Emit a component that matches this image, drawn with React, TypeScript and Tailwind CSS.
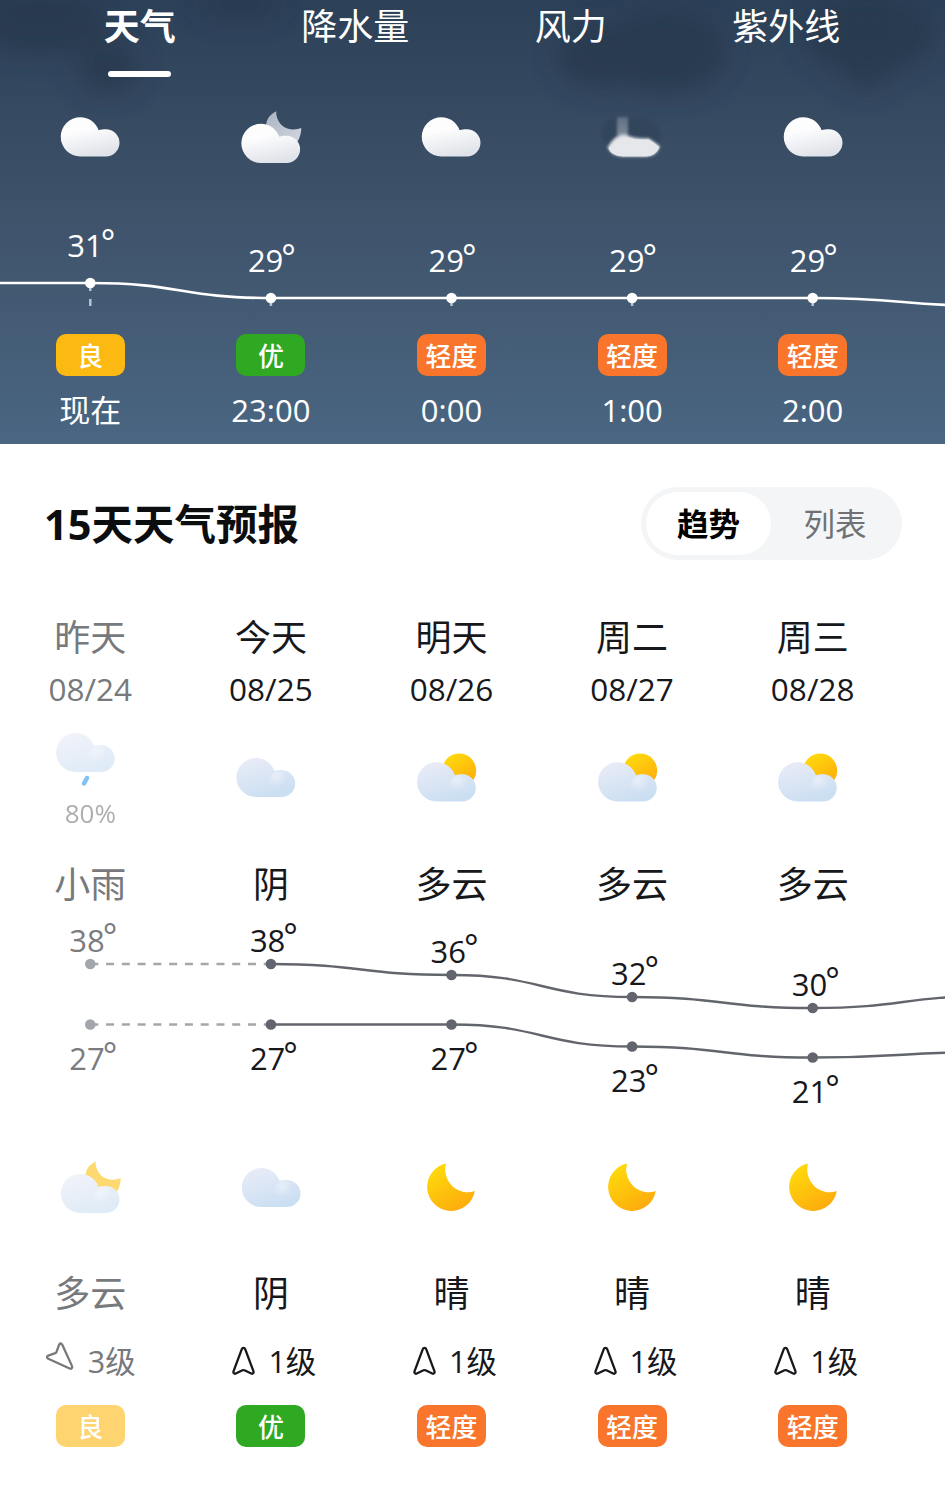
type IconName = "cloud" | "cloudMoon" | "cloudFaded" | "rain" | "overcast" | "partly" | "nightCloudy" | "nightOvercast" | "moon"

type AirLevel = "good" | "great" | "light"

type Hour = {
  time: string
  temp: number
  y: number
  icon: IconName
  air: AirLevel
}

type Day = {
  name: string
  date: string
  icon: IconName
  rain?: string
  text: string
  high: number
  highY: number
  low: number
  lowY: number
  nightIcon: IconName
  nightText: string
  wind: string
  air: AirLevel
}

const tabs = ["天气", "降水量", "风力", "紫外线"]

const hours: Hour[] = [
  { time: "现在", temp: 31, y: 83, icon: "cloud", air: "good" },
  { time: "23:00", temp: 29, y: 98, icon: "cloudMoon", air: "great" },
  { time: "0:00", temp: 29, y: 98, icon: "cloud", air: "light" },
  { time: "1:00", temp: 29, y: 98, icon: "cloudFaded", air: "light" },
  { time: "2:00", temp: 29, y: 98, icon: "cloud", air: "light" },
]

const days: Day[] = [
  { name: "昨天", date: "08/24", icon: "rain", rain: "80%", text: "小雨", high: 38, highY: 54, low: 27, lowY: 114.5, nightIcon: "nightCloudy", nightText: "多云", wind: "3级", air: "good" },
  { name: "今天", date: "08/25", icon: "overcast", text: "阴", high: 38, highY: 54, low: 27, lowY: 114.5, nightIcon: "nightOvercast", nightText: "阴", wind: "1级", air: "great" },
  { name: "明天", date: "08/26", icon: "partly", text: "多云", high: 36, highY: 65, low: 27, lowY: 114.5, nightIcon: "moon", nightText: "晴", wind: "1级", air: "light" },
  { name: "周二", date: "08/27", icon: "partly", text: "多云", high: 32, highY: 87, low: 23, lowY: 136.5, nightIcon: "moon", nightText: "晴", wind: "1级", air: "light" },
  { name: "周三", date: "08/28", icon: "partly", text: "多云", high: 30, highY: 98, low: 21, lowY: 147.5, nightIcon: "moon", nightText: "晴", wind: "1级", air: "light" },
]

const airLevels = {
  good: { label: "良", color: "bg-[#fcb912]" },
  great: { label: "优", color: "bg-[#2fa822]" },
  light: { label: "轻度", color: "bg-[#f8752b]" },
}

const COL = 180.6
const colX = (i: number) => COL * i + COL / 2

// smooth line with horizontal tangents at every point
function curve(ys: number[], from = 0) {
  return ys
    .map((y, i) => {
      const x = colX(i + from)
      if (i === 0) return `M${x} ${y}`
      const mid = x - COL / 2
      return `C${mid} ${ys[i - 1]} ${mid} ${y} ${x} ${y}`
    })
    .join(" ")
}

function Gradients() {
  return (
    <svg className="absolute size-0" aria-hidden="true">
      <defs>
        <linearGradient id="white" gradientUnits="userSpaceOnUse" x1="24" y1="0" x2="32" y2="39">
          <stop offset="0.3" stopColor="#fdfdfe" />
          <stop offset="1" stopColor="#dfe2e8" />
        </linearGradient>
        <linearGradient id="blue" gradientUnits="userSpaceOnUse" x1="18" y1="0" x2="30" y2="39">
          <stop offset="0" stopColor="#e8ebf7" />
          <stop offset="1" stopColor="#cbdff2" />
        </linearGradient>
        <radialGradient id="glow" gradientUnits="userSpaceOnUse" cx="40" cy="18" r="11">
          <stop offset="0" stopColor="#eaf0f9" stopOpacity="0.85" />
          <stop offset="1" stopColor="#eaf0f9" stopOpacity="0" />
        </radialGradient>
        <linearGradient id="sun" x1="0.2" y1="0" x2="0.8" y2="1">
          <stop offset="0" stopColor="#ffdc0c" />
          <stop offset="1" stopColor="#fda80d" />
        </linearGradient>
        <linearGradient id="greyMoon" x1="0" y1="0" x2="1" y2="1">
          <stop offset="0" stopColor="#a9b3c1" />
          <stop offset="1" stopColor="#d3d8e0" />
        </linearGradient>
        <linearGradient id="streak" x1="0" y1="0" x2="0" y2="1">
          <stop offset="0" stopColor="#8f9cac" />
          <stop offset="1" stopColor="#c9cfd8" />
        </linearGradient>
        <filter id="soft" x="-20%" y="-20%" width="140%" height="140%">
          <feGaussianBlur stdDeviation="1.5" />
        </filter>
        <filter id="softer" x="-30%" y="-30%" width="160%" height="160%">
          <feGaussianBlur stdDeviation="13" />
        </filter>
      </defs>
    </svg>
  )
}

function Cloud({ x, y, fill }: { x: number; y: number; fill: string }) {
  return (
    <g transform={`translate(${x} ${y})`} fill={fill}>
      <path d="M19.6 0C28 0 35.2 5.2 38 13C40 12.200 42.500 11.900 45.200 11.900A13.600 13.600 0 0 1 45.200 39.100H19.600A19.550 19.550 0 0 1 19.600 0Z" />
      {fill === "url(#blue)" && <circle cx="45.2" cy="25.5" r="13.6" fill="url(#glow)" />}
    </g>
  )
}

const crescent = "M35 -12.500C28.500 -9.500 25 -4.500 24.500 3L40 20L56.500 17.500C58.500 14 60 9 60 4C55 6.500 46 6.500 40.500 1.500C36.500 -2.500 34.500 -8 35 -12.500Z"

function WeatherIcon({ name }: { name: IconName }) {
  return (
    <svg className="h-20 w-20 shrink-0 overflow-visible" viewBox="0 0 80 80">
      {name === "cloud" && <Cloud x={10.7} y={12.3} fill="url(#white)" />}
      {name === "cloudMoon" && (
        <>
          <path d={crescent} fill="url(#greyMoon)" transform="translate(10.3 18.800)" />
          <Cloud x={10.3} y={18.8} fill="url(#white)" />
        </>
      )}
      {name === "cloudFaded" && (
        <g transform="translate(8.500 12.300)">
          <path d="M0 17Q3 3 16 1H44Q60 8 60 22L57 32Q50 20 36 19L22 17L8 30Z" fill="#2b3c51" opacity="0.4" filter="url(#soft)" />
          <rect x="16.500" y="0" width="11" height="19" fill="url(#streak)" opacity="0.5" filter="url(#soft)" />
          <path d="M7 30Q15 17 24 17Q34 22 48 21Q53 24 59.500 29Q56 39 46 39.100H22Q11 39 7 30Z" fill="#e2e4e9" filter="url(#soft)" />
          <path d="M8 31Q18 21 26 20Q36 23 48 22Q53 25 59 30Q55 39 46 39.100H22Q11 39 8 31Z" fill="#e6e7eb" />
        </g>
      )}
      {name === "rain" && (
        <>
          <Cloud x={10} y={5} fill="url(#blue)" />
          <path d="M41 50L38 55.500" stroke="#2b9bec" strokeWidth="4.500" strokeLinecap="round" />
        </>
      )}
      {name === "overcast" && <Cloud x={10.4} y={30} fill="url(#blue)" />}
      {name === "partly" && (
        <>
          <circle cx="52.200" cy="42.500" r="17" fill="url(#sun)" />
          <Cloud x={10} y={34.3} fill="url(#blue)" />
        </>
      )}
      {name === "nightCloudy" && (
        <>
          <path d={crescent} fill="#fcc010" transform="translate(10.700 24)" />
          <Cloud x={10.7} y={24} fill="url(#blue)" />
        </>
      )}
      {name === "nightOvercast" && <Cloud x={10.7} y={18} fill="url(#blue)" />}
      {name === "moon" && (
        <path d="M18.500 0A24 24 0 1 0 47.300 27.500A22.500 22.500 0 0 1 18.500 0Z" fill="url(#sun)" transform="translate(16.500 13.500)" />
      )}
    </svg>
  )
}

function Badge({ level, faded = false }: { level: AirLevel; faded?: boolean }) {
  const { label, color } = airLevels[level]
  return (
    <span className={`flex h-[42px] w-[69px] items-center justify-center rounded-[10px] pt-[2px] text-[26px] leading-none font-medium text-white ${color} ${faded ? "opacity-60" : ""}`}>
      {label}
    </span>
  )
}

function Temp({ x, y, value, fill }: { x: number; y: number; value: number; fill: string }) {
  return (
    <text x={x} y={y} fill={fill} fontSize="31">
      {value}
      <tspan dy="-2.500" dx="-2" fontSize="34">°</tspan>
    </text>
  )
}

function HourlyChart() {
  const ys = hours.map((h) => h.y)
  return (
    <svg className="block h-[134px] w-full" viewBox="0 0 945 134">
      {hours.map((h, i) => (
        <path key={h.time} d={`M${colX(i)} ${h.y}V106`} stroke="#b9c4d0" strokeWidth="2.500" strokeDasharray="8 8" />
      ))}
      <path d={`M0 83H90.300 ${curve([...ys, 106])}`} fill="none" stroke="#ffffff" strokeWidth="2.600" />
      {hours.map((h, i) => (
        <g key={h.time}>
          <circle cx={colX(i)} cy={h.y} r="5.300" fill="#ffffff" />
          <Temp x={colX(i) - 23} y={h.y - 26} value={h.temp} fill="#ffffff" />
        </g>
      ))}
    </svg>
  )
}

function DailyChart() {
  const highs = days.map((d) => d.highY)
  const lows = days.map((d) => d.lowY)
  return (
    <svg className="block h-[240px] w-full" viewBox="0 0 945 240">
      <g fill="none" strokeWidth="2.400">
        <path d={`M90.300 ${highs[0]}H270.900M90.300 ${lows[0]}H270.900`} stroke="#a5a6aa" strokeDasharray="8 7.770" />
        <path d={curve([...highs.slice(1), 86], 1)} stroke="#63656d" />
        <path d={curve([...lows.slice(1), 142], 1)} stroke="#63656d" />
      </g>
      {days.map((d, i) => {
        const dot = i === 0 ? "#a3a7ac" : "#62656d"
        const text = i === 0 ? "#7b7c7f" : "#17181b"
        return (
          <g key={d.date}>
            <circle cx={colX(i)} cy={d.highY} r="5.300" fill={dot} />
            <circle cx={colX(i)} cy={d.lowY} r="5.300" fill={dot} />
            <Temp x={colX(i) - 21} y={d.highY - 12.5} value={d.high} fill={text} />
            <Temp x={colX(i) - 21} y={d.lowY + 45.5} value={d.low} fill={text} />
          </g>
        )
      })}
    </svg>
  )
}

function WindArrow({ turned }: { turned: boolean }) {
  return (
    <svg className={`h-[30px] w-[23px] ${turned ? "-translate-x-px -translate-y-[2px] rotate-135" : ""}`} viewBox="0 0 23 30" fill="none" stroke="currentColor" strokeWidth="2.300" strokeLinejoin="round">
      <path d="M9.800 3.200C10.400 1.500 12.600 1.500 13.200 3.200L21.400 25.200C22 27 20.800 28.200 19.200 27.500L12.500 24.300Q11.500 23.900 10.500 24.300L3.800 27.500C2.200 28.200 1 27 1.600 25.200Z" />
    </svg>
  )
}

function Hourly() {
  return (
    <section className="relative h-[444px] overflow-hidden bg-linear-to-b from-[#2c4058] via-[#3f536b] to-[#4a6682] text-white">
      {/* storm clouds behind the tabs */}
      <svg className="absolute inset-0 h-[160px] w-full" viewBox="0 0 945 160">
        <g fill="#27394b" opacity="0.75" filter="url(#softer)">
          <ellipse cx="40" cy="22" rx="65" ry="32" />
          <ellipse cx="108" cy="68" rx="30" ry="26" />
          <ellipse cx="240" cy="5" rx="40" ry="14" />
          <ellipse cx="600" cy="56" rx="44" ry="32" />
          <ellipse cx="665" cy="52" rx="62" ry="42" />
          <ellipse cx="868" cy="34" rx="66" ry="40" />
          <ellipse cx="866" cy="74" rx="22" ry="16" />
        </g>
      </svg>

      <nav className="relative grid h-[78px] grid-cols-[repeat(4,215.500px)] pl-8">
        {tabs.map((tab, i) => (
          <div key={tab} className={`flex flex-col items-center text-[36px] ${i === 0 ? "font-bold" : ""}`}>
            <span className="h-[71px] leading-[54px]">{tab}</span>
            {i === 0 && <span className="h-1.5 w-[63px] rounded-sm bg-white" />}
          </div>
        ))}
      </nav>

      <div className="relative grid h-[122px] grid-cols-[repeat(5,180.600px)] pt-[27px]">
        {hours.map((h) => (
          <div key={h.time} className="flex justify-center">
            <WeatherIcon name={h.icon} />
          </div>
        ))}
      </div>

      <HourlyChart />

      <div className="grid grid-cols-[repeat(5,180.600px)]">
        {hours.map((h) => (
          <div key={h.time} className="flex flex-col items-center">
            <Badge level={h.air} />
            <span className="mt-[13px] text-[31px] leading-[42px]">{h.time}</span>
          </div>
        ))}
      </div>
    </section>
  )
}

function Forecast() {
  return (
    <section className="text-[#17181b]">
      <div className="flex h-[158px] items-center justify-between pr-[43px] pl-[44px]">
        <h2 className="pt-px text-[41.500px] leading-[60px] font-bold text-[#0c0d0f]">15天天气预报</h2>
        <div className="flex h-[73px] w-[261px] items-center rounded-full bg-[#f3f5f6] p-[5px] text-[31.500px]">
          <span className="flex h-full w-[125px] items-center justify-center rounded-full bg-white pt-px font-bold text-black">趋势</span>
          <span className="flex-1 pt-px pl-[2px] text-center text-[#6f7174]">列表</span>
        </div>
      </div>

      <div className="grid grid-cols-[repeat(5,180.600px)]">
        {days.map((d, i) => (
          <div key={d.date} className={`flex flex-col items-center ${i === 0 ? "text-[#77797c]" : ""}`}>
            <span className="mt-[10px] text-[36px] leading-[52px]">{d.name}</span>
            <span className="-mt-px text-[31.500px] leading-[52px]">{d.date}</span>
            <div className={`mt-[13px] flex h-[131px] flex-col items-center ${i === 0 ? "opacity-60" : ""}`}>
              <span className="-ml-[9px] h-[67px]">
                <WeatherIcon name={d.icon} />
              </span>
              {d.rain && <span className="text-[26px] leading-[36px]">{d.rain}</span>}
            </div>
            <span className="text-[36px] leading-[52px]">{d.text}</span>
          </div>
        ))}
      </div>

      <div className="-mt-px">
        <DailyChart />
      </div>

      <div className="grid grid-cols-[repeat(5,180.600px)]">
        {days.map((d, i) => (
          <div key={d.date} className={`flex flex-col items-center ${i === 0 ? "text-[#77797c]" : ""}`}>
            <div className={`h-[118px] ${i === 0 ? "opacity-60" : ""}`}>
              <WeatherIcon name={d.nightIcon} />
            </div>
            <span className="text-[36px] leading-[52px]">{d.nightText}</span>
            <div className="mt-[20px] flex h-[42px] items-center gap-[13px] pl-[7px] text-[30.500px]">
              <WindArrow turned={i === 0} />
              <span className="leading-[42px]">{d.wind}</span>
            </div>
            <div className="mt-[23px]">
              <Badge level={d.air} faded={i === 0} />
            </div>
          </div>
        ))}
      </div>
    </section>
  )
}

export default function App() {
  return (
    <main className="h-[1496px] w-[945px] overflow-hidden bg-white font-['Open_Sans','Noto_Sans_CJK_SC',sans-serif]">
      <Gradients />
      <Hourly />
      <Forecast />
    </main>
  )
}
